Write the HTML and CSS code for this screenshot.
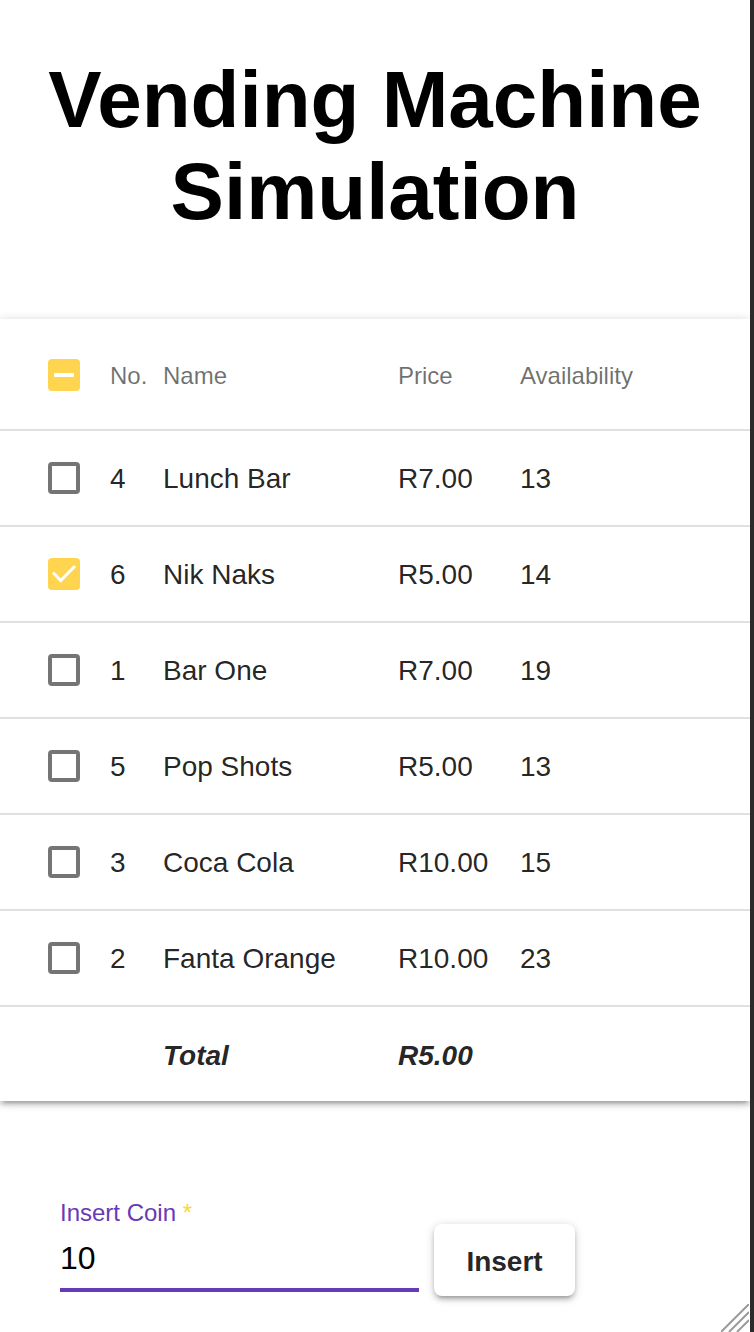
FILE: index.html
```html
<!DOCTYPE html>
<html>
<head>
<meta charset="utf-8">
<title>Vending Machine Simulation</title>
<link rel="stylesheet" href="styles.css">
</head>
<body>
<div class="page">
  <h1 class="title">Vending Machine Simulation</h1>

  <div class="card">
    <div class="row head">
      <div class="cell"><span class="cb cb-on"><svg viewBox="0 0 32 32" width="32" height="32"><rect x="6" y="14" width="20" height="4" rx="1" fill="#fff"/></svg></span></div>
      <div class="cell">No.</div>
      <div class="cell">Name</div>
      <div class="cell">Price</div>
      <div class="cell">Availability</div>
    </div>
    <div class="row">
      <div class="cell"><span class="cb"></span></div>
      <div class="cell">4</div><div class="cell">Lunch Bar</div><div class="cell">R7.00</div><div class="cell">13</div>
    </div>
    <div class="row">
      <div class="cell"><span class="cb cb-on"><svg viewBox="0 0 32 32" width="32" height="32"><path d="M5 14.5 L12.7 22.5 L27 8" fill="none" stroke="#fff" stroke-width="3"/></svg></span></div>
      <div class="cell">6</div><div class="cell">Nik Naks</div><div class="cell">R5.00</div><div class="cell">14</div>
    </div>
    <div class="row">
      <div class="cell"><span class="cb"></span></div>
      <div class="cell">1</div><div class="cell">Bar One</div><div class="cell">R7.00</div><div class="cell">19</div>
    </div>
    <div class="row">
      <div class="cell"><span class="cb"></span></div>
      <div class="cell">5</div><div class="cell">Pop Shots</div><div class="cell">R5.00</div><div class="cell">13</div>
    </div>
    <div class="row">
      <div class="cell"><span class="cb"></span></div>
      <div class="cell">3</div><div class="cell">Coca Cola</div><div class="cell">R10.00</div><div class="cell">15</div>
    </div>
    <div class="row">
      <div class="cell"><span class="cb"></span></div>
      <div class="cell">2</div><div class="cell">Fanta Orange</div><div class="cell">R10.00</div><div class="cell">23</div>
    </div>
    <div class="row total">
      <div class="cell"></div>
      <div class="cell"></div>
      <div class="cell">Total</div>
      <div class="cell">R5.00</div>
      <div class="cell"></div>
    </div>
  </div>

  <div class="form">
    <div class="field">
      <label class="label">Insert Coin <span class="star">*</span></label>
      <div class="value">10</div>
      <div class="underline"></div>
    </div>
    <button class="btn">Insert</button>
  </div>

  <svg class="grip" viewBox="0 0 28 28" width="28" height="28">
    <line x1="0" y1="28" x2="28" y2="0" stroke="#9a9a9a" stroke-width="2"/>
    <line x1="8" y1="28" x2="28" y2="8" stroke="#9a9a9a" stroke-width="2"/>
    <line x1="16" y1="28" x2="28" y2="16" stroke="#9a9a9a" stroke-width="2"/>
  </svg>
</div>
</body>
</html>
```

FILE: styles.css
```css
html, body {
  margin: 0;
  padding: 0;
  background: #2b2b2b;
}

.page {
  position: relative;
  width: 750px;
  height: 1332px;
  background: #fff;
  overflow: hidden;
  font-family: "Liberation Sans", Arial, sans-serif;
  color: rgba(0, 0, 0, 0.87);
}

.title {
  margin: 0;
  padding-top: 54px;
  font-size: 80px;
  line-height: 92px;
  font-weight: 700;
  text-align: center;
  color: #000;
}

.card {
  margin-top: 81px;
  background: #fff;
  box-shadow: 0 4px 4px rgba(0, 0, 0, 0.14), 0 6px 2px -4px rgba(0, 0, 0, 0.12), 0 2px 10px rgba(0, 0, 0, 0.2);
}

.row {
  display: grid;
  grid-template-columns: 62px 53px 235px 122px 1fr;
  align-items: center;
  padding-left: 48px;
  padding-top: 2px;
  height: 96px;
  box-sizing: border-box;
  border-bottom: 2px solid #e0e0e0;
  font-size: 28px;
}

.row .cell:first-child {
  margin-top: -2px;
}

.row.head {
  height: 112px;
  padding-top: 4px;
  font-size: 24px;
  color: rgba(0, 0, 0, 0.56);
}

.row.total {
  height: 94px;
  padding-top: 4px;
  border-bottom: none;
  font-weight: 700;
  font-style: italic;
}

.cell {
  white-space: nowrap;
}

.cb {
  display: block;
  width: 32px;
  height: 32px;
  box-sizing: border-box;
  border: 4px solid #757575;
  border-radius: 4px;
}

.cb svg {
  display: block;
}

.cb-on {
  border: none;
  background: #ffd54f;
}

.form {
  display: flex;
  align-items: flex-start;
  gap: 15px;
  padding-left: 60px;
  margin-top: 96px;
}

.field {
  width: 359px;
}

.label {
  display: block;
  font-size: 24px;
  line-height: 30px;
  padding-top: 1px;
  color: #673ab7;
}

.star {
  color: #fdd835;
}

.value {
  margin-top: 6px;
  font-size: 32px;
  line-height: 48px;
  color: #000;
}

.underline {
  margin-top: 6px;
  height: 4px;
  background: #673ab7;
}

.btn {
  margin-top: 27px;
  width: 141px;
  height: 72px;
  padding: 4px 0 0;
  border: none;
  border-radius: 8px;
  background: #fff;
  font-family: "Liberation Sans", Arial, sans-serif;
  font-size: 28px;
  font-weight: 700;
  color: rgba(0, 0, 0, 0.87);
  box-shadow: 0 4px 4px rgba(0, 0, 0, 0.14), 0 6px 2px -4px rgba(0, 0, 0, 0.12), 0 2px 10px rgba(0, 0, 0, 0.2);
}

.grip {
  position: absolute;
  right: 1px;
  bottom: 0;
}
```
